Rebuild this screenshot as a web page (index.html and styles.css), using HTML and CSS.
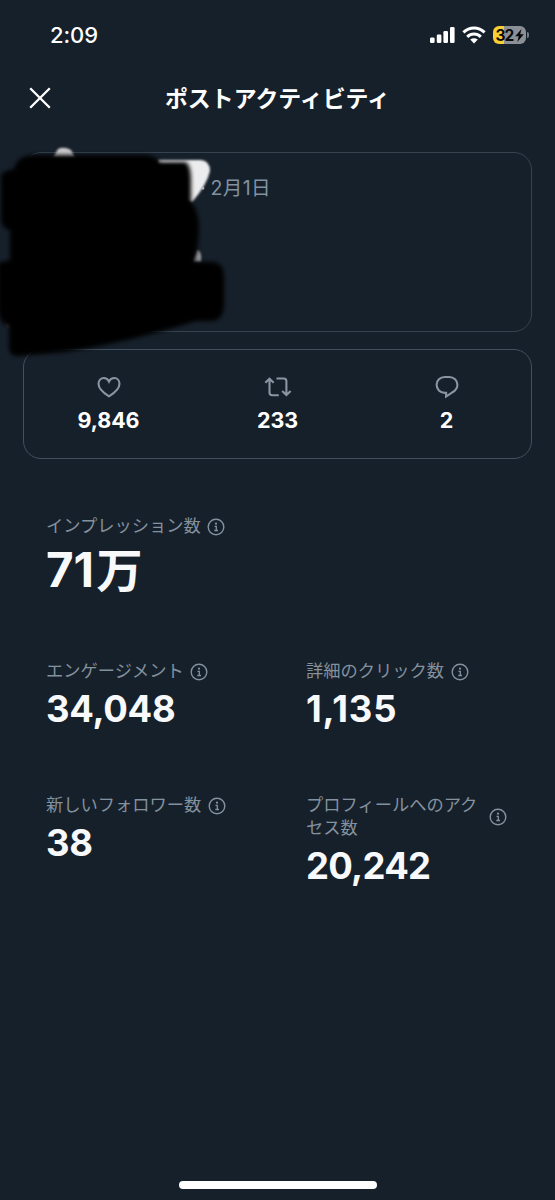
FILE: index.html
```html
<!DOCTYPE html>
<html lang="ja">
<head>
<meta charset="utf-8">
<title>ポストアクティビティ</title>
<link rel="stylesheet" href="styles.css">
</head>
<body>
<svg class="defs" width="0" height="0">
  <symbol id="info" viewBox="0 0 18 18">
    <circle cx="9" cy="9" r="7.8" fill="none" stroke="currentColor" stroke-width="1.4"/>
    <circle cx="9" cy="5.7" r="1.1" fill="currentColor"/>
    <path d="M7.5 8.4H9.3V12.5M7.3 12.5H11" fill="none" stroke="currentColor" stroke-width="1.3"/>
  </symbol>
</svg>
<div class="screen">
  <div class="status">
    <span class="time">2:09</span>
    <div class="indicators">
      <svg width="25" height="18" viewBox="0 0 25 18" fill="#fff">
        <rect x="0" y="11.5" width="4.6" height="5.5" rx="1.3"/>
        <rect x="6.8" y="8.5" width="4.6" height="8.5" rx="1.3"/>
        <rect x="13.4" y="5" width="4.6" height="12" rx="1.3"/>
        <rect x="20" y="1" width="4.6" height="16" rx="1.3"/>
      </svg>
      <svg class="wifi" width="24" height="18" viewBox="0 0 24 18" fill="none" stroke="#fff" stroke-width="3">
        <path d="M1.4 6.4Q6 1.9 12 1.9T22.6 6.4"/>
        <path d="M5.2 10.8Q8.2 7.9 12 7.9T18.8 10.8"/>
        <path d="M12 17.4L8.2 13.6Q12 10.8 15.8 13.6Z" fill="#fff" stroke="none"/>
      </svg>
      <div class="battery"><span>32</span>
        <svg width="9" height="13" viewBox="0 0 9 13"><path d="M6.5 0L.2 7.3H3.7L2.3 13L8.8 5.3H5.2Z" fill="#080a0c"/></svg>
      </div>
      <i class="battery-cap"></i>
    </div>
  </div>
  <header class="header">
    <svg class="close" width="22" height="22" viewBox="0 0 22 22"><path d="M1.2 1.2L20.8 20.8M20.8 1.2L1.2 20.8" stroke="#fff" stroke-width="2.3"/></svg>
    <h1>ポストアクティビティ</h1>
  </header>
  <section class="post"><span class="date"><span class="dot">·</span>2月1日</span></section>
  <section class="counts">
    <div class="count">
      <svg width="24" height="24" viewBox="0 0 24 24"><path d="M12 21.3C7.2 18.4 1.5 13.9 1.5 8.8C1.5 5.4 3.9 3 6.8 3C9.2 3 11 4.4 12 6.5C13 4.4 14.8 3 17.2 3C20.1 3 22.5 5.4 22.5 8.8C22.5 13.9 16.8 18.4 12 21.3Z"/></svg>
      <b>9,846</b>
    </div>
    <div class="count">
      <svg width="28" height="24" viewBox="0 0 28 24"><path d="M1.3 7.8L5.5 3.7L9.7 7.8M5.5 4V17.6Q5.5 20.2 8.1 20.2H14.8M12.5 3.5H19.8Q22.4 3.5 22.4 6.1V20M18.2 15.9L22.4 20L26.6 15.9"/></svg>
      <b>233</b>
    </div>
    <div class="count">
      <svg width="24" height="24" viewBox="0 0 24 24"><path d="M9.8 2H14.2C19 2 22.4 5.4 22.4 9.8C22.4 13.1 20.7 15.4 18 17L11.1 21.6V17.9H9.8C5 17.9 1.6 14.3 1.6 9.8C1.6 5.4 5 2 9.8 2Z"/></svg>
      <b>2</b>
    </div>
  </section>
  <main class="metrics">
    <div class="metric hero">
      <div class="label"><span>インプレッション数</span><svg><use href="#info"/></svg></div>
      <strong>71<span class="unit">万</span></strong>
    </div>
    <div class="metric">
      <div class="label"><span>エンゲージメント</span><svg><use href="#info"/></svg></div>
      <strong>34,048</strong>
    </div>
    <div class="metric">
      <div class="label"><span>詳細のクリック数</span><svg><use href="#info"/></svg></div>
      <strong class="loose">1,135</strong>
    </div>
    <div class="metric">
      <div class="label"><span>新しいフォロワー数</span><svg><use href="#info"/></svg></div>
      <strong>38</strong>
    </div>
    <div class="metric">
      <div class="label wide"><span>プロフィールへのアク<br>セス数</span><svg><use href="#info"/></svg></div>
      <strong class="tight">20,242</strong>
    </div>
  </main>
  <div class="home"></div>
  <svg class="scribble" width="240" height="230" viewBox="0 135 240 230">
    <defs>
      <filter id="soft" x="-10%" y="-10%" width="120%" height="120%"><feGaussianBlur stdDeviation="2.2"/></filter>
      <filter id="edge" x="-30%" y="-30%" width="160%" height="160%"><feGaussianBlur stdDeviation="1.2"/></filter>
    </defs>
    <g filter="url(#edge)">
      <path d="M53 158L58 149Q64 146 71 150L75 158Z" fill="#c9c9cb"/>
      <path d="M158 160H201Q210 161 210 171Q207 185 192 202L184 200V165H158Z" fill="#ececee"/>
      <path d="M192 262L197 250Q202 251 201 262Z" fill="#99999d"/>
      <path d="M3 315L7 327H17V315Z" fill="#555158"/>
    </g>
    <path filter="url(#soft)" d="M30 155H145Q156 156 160 162H186Q191 166 191 180V202Q199 211 199 228Q199 245 194 262H214Q224 264 224 277V306Q223 320 212 321H196Q130 342 66 352L18 356Q8 356 9 345V327Q-2 323 -2 306V263L10 260V230Q1 229 1 216V176Q2 171 14 169Q17 157 30 155Z" fill="#000"/>
  </svg>
</div>
</body>
</html>
```
FILE: styles.css
```css
* { box-sizing: border-box; }
body {
  margin: 0;
  background: #16202a;
  color: #fff;
  font-family: Inter, "Noto Sans CJK JP", sans-serif;
}
.defs { position: absolute; }
.screen {
  position: relative;
  width: 555px;
  height: 1200px;
  overflow: hidden;
  display: flex;
  flex-direction: column;
}
.status {
  height: 70px;
  padding: 0 26px 0 50px;
  display: flex;
  align-items: center;
  justify-content: space-between;
}
.time { font-size: 22px; font-weight: 550; letter-spacing: -.1px; }
.indicators { display: flex; align-items: center; }
.wifi { margin: 0 7px 0 7.5px; }
.battery {
  width: 33px;
  height: 18.5px;
  border-radius: 6px;
  background: linear-gradient(90deg, #f8ce32 11px, #8b9096 11px);
  color: #080a0c;
  display: flex;
  align-items: center;
  justify-content: center;
  font-size: 15.5px;
  font-weight: 700;
  letter-spacing: -.8px;
}
.battery svg { margin-left: 1px; }
.battery-cap { width: 2px; height: 6px; margin-left: 1px; border-radius: 0 2px 2px 0; background: #747a81; }
.header {
  height: 56px;
  padding: 0 29px;
  display: grid;
  grid-template-columns: 22px 1fr 22px;
  align-items: center;
}
.header h1 { margin: 2px 0 0; text-align: center; font-size: 22.9px; line-height: 30px; font-weight: 700; }
.post, .counts {
  flex: none;
  margin: 0 23px;
  border: 1.5px solid #42505f;
  border-radius: 18px;
}
.post { height: 180px; margin-top: 26px; padding: 22px 0 0 176px; border-color: #36434f; }
.date { position: relative; z-index: 1; display: block; color: #8292a0; font-size: 19.6px; line-height: 26px; letter-spacing: .35px; }
.dot { display: inline-block; width: 10.5px; color: #b7c0c8; }
.counts {
  height: 110px;
  margin-top: 17px;
  padding-top: 25px;
  display: grid;
  grid-template-columns: repeat(3, 1fr);
}
.count { display: flex; flex-direction: column; align-items: center; }
.count svg { fill: none; stroke: #8995a3; stroke-width: 2.1; }
.count b { margin-top: 8px; font-size: 21.5px; line-height: 26px; font-weight: 700; letter-spacing: -.1px; }
.metrics {
  margin-top: 55px;
  padding-left: 46px;
  display: grid;
  grid-template-columns: 260px 1fr;
  grid-template-rows: 145px 134px 120px;
}
.hero { grid-column: 1 / 3; }
.label { display: flex; align-items: center; gap: 6.5px; color: #84919e; font-size: 17.25px; line-height: 24px; }
.label svg { width: 18px; height: 18px; flex: none; margin-top: 2px; }
.wide { gap: 12px; line-height: 23px; }
.metric strong { display: block; margin-top: 1px; font-size: 36.5px; line-height: 50px; font-weight: 700; letter-spacing: -.3px; color: #f7f9fb; }
.metric .loose { letter-spacing: .8px; }
.metric .tight { margin-top: 2px; letter-spacing: -.75px; }
.metric.hero strong { font-size: 47.5px; line-height: 64px; margin-top: 0; letter-spacing: 0; }
.unit { margin-left: 2.5px; font-size: 46px; }
.home {
  position: absolute;
  left: 179px;
  top: 1181px;
  width: 198px;
  height: 8px;
  border-radius: 4px;
  background: #fff;
}
.scribble { position: absolute; left: 0; top: 135px; }
```
